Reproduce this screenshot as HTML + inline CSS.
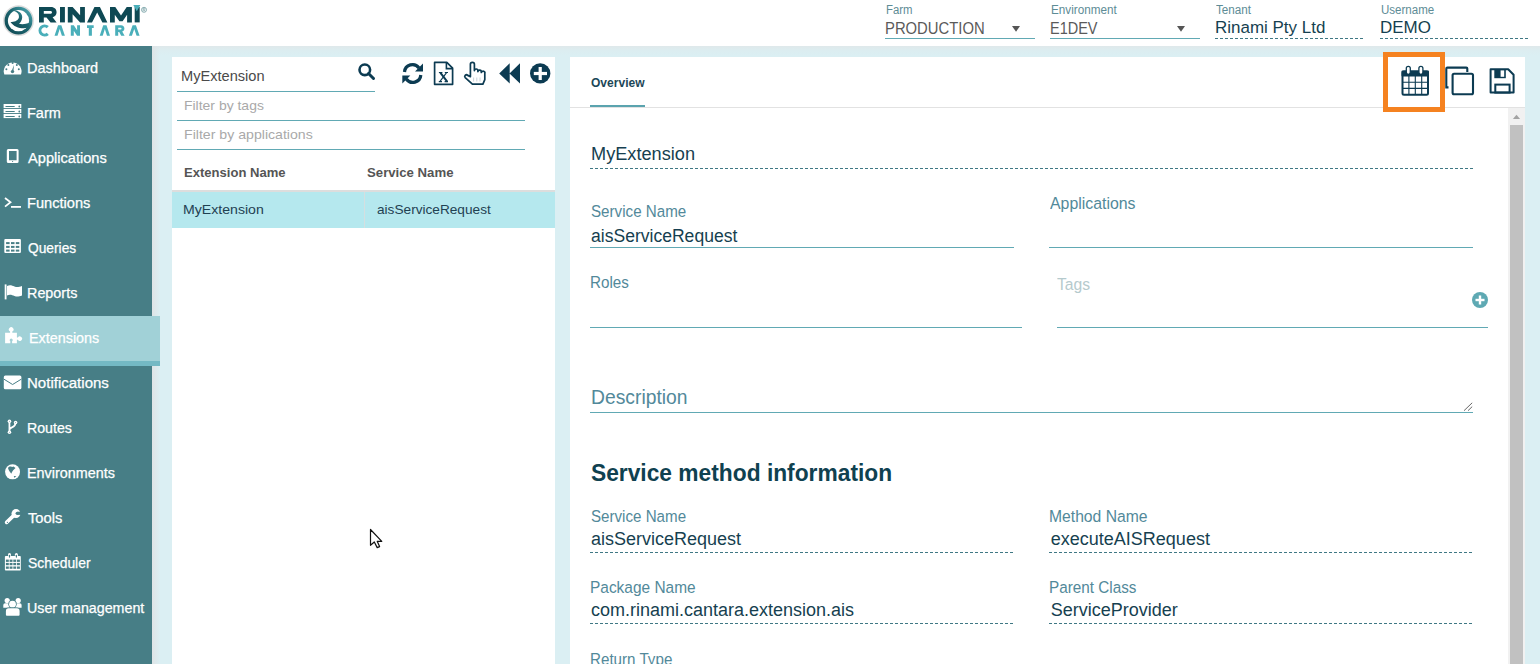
<!DOCTYPE html><html><head><meta charset="utf-8"><style>
html,body{margin:0;padding:0;width:1540px;height:664px;overflow:hidden;background:#dbeff3;font-family:'Liberation Sans', sans-serif;}
</style></head><body>
<div style="position:absolute;left:0px;top:0px;width:1540px;height:46px;background:#fff"></div>
<div style="position:absolute;left:152px;top:46px;width:1388px;height:9px;background:linear-gradient(to bottom,rgba(226,226,226,0.5),rgba(226,226,226,0.15) 50%,rgba(226,226,226,0))"></div>
<svg style="position:absolute;left:0px;top:0px;overflow:visible" width="150" height="46" viewBox="0 0 150 46">
<defs><linearGradient id="lg" x1="1" y1="0" x2="0" y2="1"><stop offset="0" stop-color="#55b5bf"/><stop offset="0.45" stop-color="#1d6670"/><stop offset="1" stop-color="#0e4650"/></linearGradient></defs>
<circle cx="18.5" cy="20.7" r="15.4" fill="#dcdcdc"/>
<circle cx="18.5" cy="20.7" r="13.9" fill="url(#lg)"/>
<circle cx="18.5" cy="20.7" r="10.6" fill="#fff"/>
<path d="M14.5 10.2 C19 10.5 22.5 13.5 22.2 17.5 C22 20.5 20.5 22.5 19 23.8 C22 24.6 26 24.2 29.5 22.8 L28.5 27.5 C23 29.5 14.5 28 10.5 22 C14 22 17.5 21 18.8 18 C19.6 15 18 12 14 10.9Z" fill="url(#lg)"/>

<path fill="#0f4954" fill-rule="evenodd" d="M39 7 L50.8 7 C54.6 7 56.6 9.4 56.6 12.3 C56.6 14.9 55 16.6 52.6 17.2 L56.6 22.4 L50.6 22.4 L46.5 17.4 L43.8 17.4 L43.8 22.4 L39 22.4Z M43.8 10.9 L50.2 10.9 C51.6 10.9 52 11.6 52 12.3 C52 13.1 51.6 13.8 50.2 13.8 L43.8 13.8Z"/>
<rect x="60" y="7" width="4.9" height="15.4" fill="#0f4954"/>
<path fill="#0f4954" d="M67.8 22.4 L67.8 7 L72.6 7 L80.1 15.2 L80.1 7 L84.9 7 L84.9 22.4 L80.1 22.4 L72.6 14.2 L72.6 22.4Z"/>
<path fill="#0f4954" d="M87 22.4 L94.45 7 L99.95 7 L107.4 22.4 L102.40 22.4 L97.20 12.39 L92.00 22.4Z"/>
<path fill="#0f4954" d="M110 22.4 L110 7 L115.3 7 L121 15.6 L126.7 7 L131.9 7 L131.9 22.4 L127.1 22.4 L127.1 14.8 L122.6 21.2 L119.4 21.2 L114.8 14.8 L114.8 22.4Z"/>
<rect x="134.7" y="7" width="5" height="15.4" fill="#0f4954"/>
<path fill="#4aafba" d="M133.3 5 L140.4 5 L136.8 11.2Z"/>
<circle cx="144" cy="9.8" r="2.5" fill="none" stroke="#6f9aa0" stroke-width="0.8"/><path d="M143.1 11.3 V8.4 H144.3 A0.75 0.75 0 0 1 144.3 9.9 H143.1 M144.2 9.9 L145 11.3" fill="none" stroke="#6f9aa0" stroke-width="0.6"/>
<path d="M47.8 27.2 A4.6 4.6 0 1 0 47.8 33.8" fill="none" stroke="#4aafba" stroke-width="3"/>
<path fill="#4aafba" d="M54.5 35.7 L58.05 25.3 L61.35 25.3 L64.9 35.7 L61.90 35.7 L59.70 28.94 L57.50 35.7Z"/>
<path fill="#4aafba" d="M70.8 35.7 L70.8 25.3 L73.8 25.3 L77.1 30.3 L77.1 25.3 L80 25.3 L80 35.7 L77.1 35.7 L73.8 30.7 L73.8 35.7Z"/>
<path fill="#4aafba" d="M87 25.3 L93.7 25.3 L93.7 27.9 L91.9 27.9 L91.9 35.7 L88.8 35.7 L88.8 27.9 L87 27.9Z"/>
<path fill="#4aafba" d="M99.7 35.7 L103.20 25.3 L106.50 25.3 L110 35.7 L107.00 35.7 L104.85 28.94 L102.70 35.7Z"/>
<path fill="#4aafba" fill-rule="evenodd" d="M115.2 25.3 L121 25.3 C123.2 25.3 124.4 26.8 124.4 28.6 C124.4 30.1 123.6 31.2 122.2 31.6 L124.6 35.7 L121.2 35.7 L119.2 32 L118.2 32 L118.2 35.7 L115.2 35.7Z M118.2 27.8 L120.8 27.8 C121.3 27.8 121.5 28.2 121.5 28.6 C121.5 29.1 121.3 29.5 120.8 29.5 L118.2 29.5Z"/>
<path fill="#4aafba" d="M128.9 35.7 L132.60 25.3 L135.90 25.3 L139.6 35.7 L136.60 35.7 L134.25 28.94 L131.90 35.7Z"/>
</svg>
<div style="position:absolute;left:885.50px;top:4px;font-size:12px;line-height:12px;color:#5d8c96;font-weight:normal;white-space:nowrap;transform:scaleX(0.9464);transform-origin:0 0;">Farm</div>
<div style="position:absolute;left:884.57px;top:21px;font-size:16px;line-height:16px;color:#5a5a5a;font-weight:normal;white-space:nowrap;transform:scaleX(0.9264);transform-origin:0 0;">PRODUCTION</div>
<div style="position:absolute;left:885px;top:38px;width:150px;height:1px;background:#61a9b4"></div>
<svg style="position:absolute;left:1012px;top:26.2px;overflow:visible" width="9" height="7" viewBox="0 0 9 7"><path d="M0 0 L8 0 L4 5.8Z" fill="#555"/></svg>
<div style="position:absolute;left:1050.50px;top:4px;font-size:12px;line-height:12px;color:#5d8c96;font-weight:normal;white-space:nowrap;transform:scaleX(0.9746);transform-origin:0 0;">Environment</div>
<div style="position:absolute;left:1049.59px;top:21px;font-size:16px;line-height:16px;color:#5a5a5a;font-weight:normal;white-space:nowrap;transform:scaleX(0.9055);transform-origin:0 0;">E1DEV</div>
<div style="position:absolute;left:1050px;top:38px;width:150px;height:1px;background:#61a9b4"></div>
<svg style="position:absolute;left:1177px;top:26.2px;overflow:visible" width="9" height="7" viewBox="0 0 9 7"><path d="M0 0 L8 0 L4 5.8Z" fill="#555"/></svg>
<div style="position:absolute;left:1215.50px;top:4px;font-size:12px;line-height:12px;color:#5d8c96;font-weight:normal;white-space:nowrap;transform:scaleX(0.9729);transform-origin:0 0;">Tenant</div>
<div style="position:absolute;left:1215.46px;top:19px;font-size:16.3px;line-height:16.3px;color:#163f50;font-weight:normal;white-space:nowrap;transform:scaleX(1.0423);transform-origin:0 0;">Rinami Pty Ltd</div>
<div style="position:absolute;left:1215px;top:38px;width:150px;height:1px;background:repeating-linear-gradient(to right,#3f7884 0 3px,transparent 3px 5px)"></div>
<div style="position:absolute;left:1380.50px;top:4px;font-size:12px;line-height:12px;color:#5d8c96;font-weight:normal;white-space:nowrap;transform:scaleX(0.9609);transform-origin:0 0;">Username</div>
<div style="position:absolute;left:1380.46px;top:19px;font-size:16.3px;line-height:16.3px;color:#163f50;font-weight:normal;white-space:nowrap;transform:scaleX(1.0428);transform-origin:0 0;">DEMO</div>
<div style="position:absolute;left:1380px;top:38px;width:150px;height:1px;background:repeating-linear-gradient(to right,#3f7884 0 3px,transparent 3px 5px)"></div>
<div style="position:absolute;left:0px;top:46px;width:152px;height:618px;background:#477e86"></div>
<div style="position:absolute;left:152px;top:46px;width:8px;height:618px;background:linear-gradient(to right,#dfe4e6,rgba(223,228,230,0))"></div>
<div style="position:absolute;left:0px;top:316px;width:160px;height:50px;background:#a1d1d7"></div>
<div style="position:absolute;left:0px;top:361px;width:160px;height:5px;background:#74b9c4"></div>
<div style="position:absolute;left:27.36px;top:61px;font-size:14px;line-height:14px;color:#fff;font-weight:normal;white-space:nowrap;transform:scaleX(1.0374);transform-origin:0 0;-webkit-text-stroke:0.25px #fff">Dashboard</div>
<div style="position:absolute;left:27.36px;top:106px;font-size:14px;line-height:14px;color:#fff;font-weight:normal;white-space:nowrap;transform:scaleX(1.0355);transform-origin:0 0;-webkit-text-stroke:0.25px #fff">Farm</div>
<div style="position:absolute;left:28.40px;top:151px;font-size:14px;line-height:14px;color:#fff;font-weight:normal;white-space:nowrap;transform:scaleX(1.0439);transform-origin:0 0;-webkit-text-stroke:0.25px #fff">Applications</div>
<div style="position:absolute;left:27.36px;top:196px;font-size:14px;line-height:14px;color:#fff;font-weight:normal;white-space:nowrap;transform:scaleX(1.0436);transform-origin:0 0;-webkit-text-stroke:0.25px #fff">Functions</div>
<div style="position:absolute;left:28.40px;top:241px;font-size:14px;line-height:14px;color:#fff;font-weight:normal;white-space:nowrap;transform:scaleX(0.9833);transform-origin:0 0;-webkit-text-stroke:0.25px #fff">Queries</div>
<div style="position:absolute;left:27.37px;top:286px;font-size:14px;line-height:14px;color:#fff;font-weight:normal;white-space:nowrap;transform:scaleX(1.0266);transform-origin:0 0;-webkit-text-stroke:0.25px #fff">Reports</div>
<div style="position:absolute;left:28.97px;top:331px;font-size:14px;line-height:14px;color:#fff;font-weight:normal;white-space:nowrap;transform:scaleX(1.0255);transform-origin:0 0;-webkit-text-stroke:0.25px #fff">Extensions</div>
<div style="position:absolute;left:27.33px;top:376px;font-size:14px;line-height:14px;color:#fff;font-weight:normal;white-space:nowrap;transform:scaleX(1.0737);transform-origin:0 0;-webkit-text-stroke:0.25px #fff">Notifications</div>
<div style="position:absolute;left:27.39px;top:421px;font-size:14px;line-height:14px;color:#fff;font-weight:normal;white-space:nowrap;transform:scaleX(1.0125);transform-origin:0 0;-webkit-text-stroke:0.25px #fff">Routes</div>
<div style="position:absolute;left:27.37px;top:466px;font-size:14px;line-height:14px;color:#fff;font-weight:normal;white-space:nowrap;transform:scaleX(1.0261);transform-origin:0 0;-webkit-text-stroke:0.25px #fff">Environments</div>
<div style="position:absolute;left:28.40px;top:511px;font-size:14px;line-height:14px;color:#fff;font-weight:normal;white-space:nowrap;transform:scaleX(1.0525);transform-origin:0 0;-webkit-text-stroke:0.25px #fff">Tools</div>
<div style="position:absolute;left:28.40px;top:556px;font-size:14px;line-height:14px;color:#fff;font-weight:normal;white-space:nowrap;transform:scaleX(0.9924);transform-origin:0 0;-webkit-text-stroke:0.25px #fff">Scheduler</div>
<div style="position:absolute;left:27.38px;top:601px;font-size:14px;line-height:14px;color:#fff;font-weight:normal;white-space:nowrap;transform:scaleX(1.0186);transform-origin:0 0;-webkit-text-stroke:0.25px #fff">User management</div>
<svg style="position:absolute;left:0px;top:0px;overflow:visible" width="30" height="664" viewBox="0 0 30 664"><path d="M4.3 74.4 A8.9 8.9 0 1 1 21 74.4 Z" fill="#fff"/><circle cx="6.4" cy="69.2" r="1" fill="#477e86"/><circle cx="8.4" cy="65" r="1" fill="#477e86"/><circle cx="12.6" cy="63" r="1" fill="#477e86"/><circle cx="16.8" cy="65" r="1" fill="#477e86"/><circle cx="18.8" cy="69.2" r="1" fill="#477e86"/><path d="M11.6 71.3 L13.9 65 L13.4 71.6Z" fill="#477e86"/><circle cx="12.5" cy="71.6" r="1.7" fill="#477e86"/><rect x="3.6" y="104" width="17.7" height="4.1" fill="#fff"/><rect x="5.4" y="106" width="9.4" height="1.1" rx="0.5" fill="#477e86"/><circle cx="19.3" cy="106.5" r="0.9" fill="#477e86"/><rect x="3.6" y="109" width="17.7" height="4.1" fill="#fff"/><rect x="5.4" y="111" width="9.4" height="1.1" rx="0.5" fill="#477e86"/><circle cx="19.3" cy="111.5" r="0.9" fill="#477e86"/><rect x="3.6" y="114" width="17.7" height="4.1" fill="#fff"/><rect x="5.4" y="116" width="9.4" height="1.1" rx="0.5" fill="#477e86"/><circle cx="19.3" cy="116.5" r="0.9" fill="#477e86"/><path fill-rule="evenodd" fill="#fff" d="M8.3 149 H17.1 A1.5 1.5 0 0 1 18.6 150.5 V161.5 A1.5 1.5 0 0 1 17.1 163 H8.3 A1.5 1.5 0 0 1 6.8 161.5 V150.5 A1.5 1.5 0 0 1 8.3 149Z M9 151 V160.2 H16.6 V151Z"/><circle cx="12.6" cy="161.5" r="0.6" fill="#477e86"/><path d="M5 198 L10.5 202.3 L5 206.6" fill="none" stroke="#fff" stroke-width="1.8"/><rect x="11" y="206" width="10" height="1.8" fill="#fff"/><rect x="4.3" y="239" width="16.6" height="13.9" rx="1" fill="#fff"/><rect x="6.1" y="242.1" width="3.5" height="2" fill="#477e86"/><rect x="6.1" y="245.9" width="3.5" height="2" fill="#477e86"/><rect x="6.1" y="249.6" width="3.5" height="2" fill="#477e86"/><rect x="11.0" y="242.1" width="3.5" height="2" fill="#477e86"/><rect x="11.0" y="245.9" width="3.5" height="2" fill="#477e86"/><rect x="11.0" y="249.6" width="3.5" height="2" fill="#477e86"/><rect x="15.8" y="242.1" width="3.5" height="2" fill="#477e86"/><rect x="15.8" y="245.9" width="3.5" height="2" fill="#477e86"/><rect x="15.8" y="249.6" width="3.5" height="2" fill="#477e86"/><rect x="4.7" y="284.4" width="1.8" height="15" fill="#fff"/><path d="M7 286 C10 284.5 12 285.5 14.5 286.5 C17 287.5 19 287 22 286 L22 295.5 C19 296.5 17 297 14.5 296 C12 295 10 294 7 295.5Z" fill="#fff"/><path d="M5.1 332.8 H10.1 V331.6 A2.3 2.3 0 1 1 12.3 331.6 V332.8 H16.9 V337.6 H17.9 A2.2 2.2 0 1 1 17.9 339.8 H16.9 V343.3 H12.1 V341.3 A1.5 1.5 0 1 0 10.3 341.3 V343.3 H5.1 Z" fill="#fff"/><rect x="3.8" y="375.6" width="17.6" height="13.6" rx="1.5" fill="#fff"/><path d="M3.8 379.1 L12.6 384.5 L21.4 379.1" fill="none" stroke="#477e86" stroke-width="1"/><path d="M9.45 421.3 V432.2 M15.5 422.6 C15.5 426.5 13 427 11.5 427.6 C10 428.2 9.45 429 9.45 430" fill="none" stroke="#fff" stroke-width="1.8"/><circle cx="9.45" cy="421.3" r="1.8" fill="#fff"/><circle cx="15.6" cy="422.5" r="1.8" fill="#fff"/><circle cx="9.45" cy="432.2" r="1.8" fill="#fff"/><circle cx="9.45" cy="421.3" r="0.45" fill="#477e86"/><circle cx="15.6" cy="422.5" r="0.45" fill="#477e86"/><circle cx="9.45" cy="432.2" r="0.45" fill="#477e86"/><circle cx="12.55" cy="471.85" r="7.5" fill="#fff"/><path d="M8 468 C9 466.5 10.5 466.3 12 467 L13.5 466.6 L15.5 468 L13.2 470.2 L12.2 471.8 L11.2 473.8 C10.5 472.5 9.5 471.5 8.6 469.8Z" fill="#477e86"/><path d="M13.8 476 L16.4 476.3 L14.3 477.8Z" fill="#477e86"/><path d="M6.6 522.4 L13.6 515.6" stroke="#fff" stroke-width="3.6" stroke-linecap="round"/><circle cx="16" cy="513.6" r="4.5" fill="#fff"/><circle cx="17.2" cy="513.3" r="1.6" fill="#477e86"/><rect x="17.2" y="511.7" width="5" height="3.2" fill="#477e86"/><circle cx="7.4" cy="522.3" r="0.65" fill="#477e86"/><rect x="4.9" y="556.1" width="15.9" height="14.5" rx="0.8" fill="#fff"/><rect x="5.9" y="559.6" width="2.9" height="2.3" fill="#477e86"/><rect x="5.9" y="562.9" width="2.9" height="2.3" fill="#477e86"/><rect x="5.9" y="566.5" width="2.9" height="2.3" fill="#477e86"/><rect x="9.6" y="559.6" width="2.9" height="2.3" fill="#477e86"/><rect x="9.6" y="562.9" width="2.9" height="2.3" fill="#477e86"/><rect x="9.6" y="566.5" width="2.9" height="2.3" fill="#477e86"/><rect x="13.3" y="559.6" width="2.9" height="2.3" fill="#477e86"/><rect x="13.3" y="562.9" width="2.9" height="2.3" fill="#477e86"/><rect x="13.3" y="566.5" width="2.9" height="2.3" fill="#477e86"/><rect x="17.0" y="559.6" width="2.9" height="2.3" fill="#477e86"/><rect x="17.0" y="562.9" width="2.9" height="2.3" fill="#477e86"/><rect x="17.0" y="566.5" width="2.9" height="2.3" fill="#477e86"/><rect x="8" y="553.1" width="3" height="5" rx="1.5" fill="#fff"/><rect x="14.9" y="553.1" width="3" height="5" rx="1.5" fill="#fff"/><rect x="8.9" y="554.7" width="1.2" height="3" rx="0.6" fill="#477e86"/><rect x="15.8" y="554.7" width="1.2" height="3" rx="0.6" fill="#477e86"/><circle cx="7.2" cy="600.5" r="2.6" fill="#fff"/><circle cx="18.2" cy="600.5" r="2.6" fill="#fff"/><path d="M3.3 607.7 V605 A1.8 1.8 0 0 1 5.1 603.2 H9.8 V607.7Z" fill="#fff"/><path d="M21.6 607.7 V605 A1.8 1.8 0 0 0 19.8 603.2 H15.2 V607.7Z" fill="#fff"/><circle cx="12.5" cy="604.2" r="4.2" fill="#477e86"/><circle cx="12.5" cy="604.2" r="3.4" fill="#fff"/><path d="M5.1 616.2 V611 A3.4 3.4 0 0 1 8.5 607.5 H16.5 A3.4 3.4 0 0 1 20.4 611 V616.2 Z" fill="#477e86"/><path d="M5.9 615.7 V611 A2.7 2.7 0 0 1 8.6 608.3 H16.9 A2.7 2.7 0 0 1 19.6 611 V614.7 A1 1 0 0 1 18.6 615.7 H6.9 A1 1 0 0 1 5.9 614.7Z" fill="#fff"/></svg>
<div style="position:absolute;left:172px;top:57px;width:383px;height:607px;background:#fff"></div>
<div style="position:absolute;left:180.96px;top:69px;font-size:14px;line-height:14px;color:#4a4a4a;font-weight:normal;white-space:nowrap;transform:scaleX(1.0426);transform-origin:0 0;">MyExtension</div>
<div style="position:absolute;left:177px;top:91px;width:198px;height:1px;background:#61a9b4"></div>
<svg style="position:absolute;left:358px;top:63px;overflow:visible" width="17" height="17" viewBox="0 0 17 17"><circle cx="6.8" cy="6.8" r="5.3" fill="none" stroke="#0c3b52" stroke-width="2.6"/><path d="M10.5 10.5 L15.5 15.5" stroke="#0c3b52" stroke-width="3" stroke-linecap="round"/></svg>
<div style="position:absolute;left:183.97px;top:99px;font-size:13.5px;line-height:13.5px;color:#a9a9a9;font-weight:normal;white-space:nowrap;transform:scaleX(1.0336);transform-origin:0 0;">Filter by tags</div>
<div style="position:absolute;left:177px;top:120px;width:348px;height:1px;background:#61a9b4"></div>
<div style="position:absolute;left:183.95px;top:128px;font-size:13.5px;line-height:13.5px;color:#a9a9a9;font-weight:normal;white-space:nowrap;transform:scaleX(1.0466);transform-origin:0 0;">Filter by applications</div>
<div style="position:absolute;left:177px;top:149px;width:348px;height:1px;background:#61a9b4"></div>
<svg style="position:absolute;left:0px;top:0px;overflow:visible" width="600" height="100" viewBox="0 0 600 100">
<path d="M404.5 72 A8 8 0 0 1 419 68" fill="none" stroke="#0c3b52" stroke-width="3.2"/>
<path d="M423 63.5 L423 71.5 L415 71.5Z" fill="#0c3b52"/>
<path d="M420.8 75 A8 8 0 0 1 406.3 79" fill="none" stroke="#0c3b52" stroke-width="3.2"/>
<path d="M402.3 83.5 L402.3 75.5 L410.3 75.5Z" fill="#0c3b52"/>
<path d="M434.6 62.4 L446.8 62.4 L452.6 68.2 L452.6 84.3 L434.6 84.3Z" fill="none" stroke="#0c3b52" stroke-width="1.7" stroke-linejoin="round"/>
<path d="M446.4 62.6 L446.4 68.6 L452.4 68.6" fill="none" stroke="#0c3b52" stroke-width="1.6"/>
<path d="M440.3 72.6 L447.2 81.6" stroke="#0c3b52" stroke-width="2"/>
<path d="M446.6 72.6 L439.8 81.6" stroke="#0c3b52" stroke-width="1.1"/>
<path d="M438.9 72.5 L442.4 72.5 M444.8 72.5 L448 72.5 M438.8 81.6 L442 81.6 M444.6 81.6 L448 81.6" stroke="#0c3b52" stroke-width="1.1"/>
<path d="M470.4 76.6 L470.4 64.3 A2 2 0 0 1 474.4 64.3 L474.4 70.6 A1.75 1.75 0 0 1 477.9 70.9 L477.9 71.6 A1.7 1.7 0 0 1 481.3 71.9 L481.3 72.5 A1.75 1.75 0 0 1 484.8 73.6 L484.8 79.6 L482.9 84.1 L472.4 84.1 L465.2 77.6 A1.65 1.65 0 0 1 467.7 75.4 Z" fill="none" stroke="#0c3b52" stroke-width="1.7" stroke-linejoin="round"/>
<path d="M473.6 77.5 L473.6 81.5 M476.8 77.5 L476.8 81.5 M480 77.5 L480 81.5" stroke="#c5cfd6" stroke-width="0.9"/>
<path d="M499.2 73.4 L509.7 63.2 L509.7 83.6Z M509.5 73.4 L520 63.2 L520 83.6Z" fill="#0c3b52"/>
<circle cx="540.2" cy="73.4" r="10.2" fill="#0c3b52"/>
<rect x="533.8" y="71.9" width="13.2" height="3.2" fill="#fff"/>
<rect x="538.6" y="67" width="3.2" height="13" fill="#fff"/>
</svg>
<div style="position:absolute;left:184.00px;top:166px;font-size:13.5px;line-height:13.5px;color:#555;font-weight:bold;white-space:nowrap;transform:scaleX(0.9666);transform-origin:0 0;">Extension Name</div>
<div style="position:absolute;left:367.00px;top:166px;font-size:13.5px;line-height:13.5px;color:#555;font-weight:bold;white-space:nowrap;transform:scaleX(0.9769);transform-origin:0 0;">Service Name</div>
<div style="position:absolute;left:172px;top:190px;width:383px;height:2px;background:#dddddd"></div>
<div style="position:absolute;left:172px;top:192px;width:383px;height:36px;background:#b5e8ee"></div>
<div style="position:absolute;left:364px;top:192px;width:1px;height:36px;background:#d5dfe0"></div>
<div style="position:absolute;left:182.95px;top:203px;font-size:13.5px;line-height:13.5px;color:#1f4152;font-weight:normal;white-space:nowrap;transform:scaleX(1.0452);transform-origin:0 0;">MyExtension</div>
<div style="position:absolute;left:377.00px;top:203px;font-size:13.5px;line-height:13.5px;color:#1f4152;font-weight:normal;white-space:nowrap;transform:scaleX(1.0106);transform-origin:0 0;">aisServiceRequest</div>
<svg style="position:absolute;left:370px;top:529px;overflow:visible" width="14" height="20" viewBox="0 0 14 20"><path d="M0.5 0.5 L0.5 16.3 L4.3 13 L7.2 18.6 L9.6 17.6 L7.3 12.4 L11.8 12.3 Z" fill="#fff" stroke="#111" stroke-width="1.2" stroke-linejoin="round"/></svg>
<div style="position:absolute;left:570px;top:57px;width:955px;height:607px;background:#fff"></div>
<div style="position:absolute;left:590.80px;top:77px;font-size:12px;line-height:12px;color:#1d4758;font-weight:bold;white-space:nowrap;transform:scaleX(1.0031);transform-origin:0 0;">Overview</div>
<div style="position:absolute;left:570px;top:107px;width:955px;height:1px;background:#e2e2e2"></div>
<div style="position:absolute;left:590px;top:105px;width:55px;height:2px;background:#5aa3ae"></div>
<div style="position:absolute;left:1383px;top:52px;width:52px;height:50px;border:5px solid #f58220"></div>
<svg style="position:absolute;left:0px;top:0px;overflow:visible" width="1540" height="100" viewBox="0 0 1540 100">
<rect x="1402.5" y="71.5" width="25.5" height="23.2" rx="1.5" fill="none" stroke="#0c3b52" stroke-width="2"/>
<rect x="1401.5" y="70.5" width="27.5" height="6" rx="1" fill="#0c3b52"/>
<path d="M1402 82.2 L1428.5 82.2 M1402 88.4 L1428.5 88.4 M1408.9 76 L1408.9 95 M1415.3 76 L1415.3 95 M1421.7 76 L1421.7 95" stroke="#0c3b52" stroke-width="1.1"/>
<rect x="1406.3" y="66.3" width="4" height="8" rx="2" fill="#fff" stroke="#0c3b52" stroke-width="1.3"/>
<rect x="1418.9" y="66.3" width="4" height="8" rx="2" fill="#fff" stroke="#0c3b52" stroke-width="1.3"/>
<path d="M1448.5 87.4 L1446.3 87.4 L1446.3 68.7 Q1446.3 67.6 1447.4 67.6 L1466.3 67.6 Q1467.3 67.6 1467.3 68.6 L1467.3 72" fill="none" stroke="#0c3b52" stroke-width="2.1"/>
<rect x="1452.6" y="73.8" width="20.4" height="20.4" rx="1.5" fill="none" stroke="#0c3b52" stroke-width="2.1"/>
<path d="M1490.6 69.3 L1508.2 69.3 L1513.6 74.8 L1513.6 92.5 L1490.6 92.5Z" fill="none" stroke="#0c3b52" stroke-width="2" stroke-linejoin="round"/>
<rect x="1494.3" y="69.5" width="11.5" height="8.7" fill="#0c3b52"/>
<rect x="1500.6" y="70.4" width="3.6" height="6.4" fill="#fff"/>
<rect x="1495.3" y="84.6" width="14.3" height="8" fill="none" stroke="#0c3b52" stroke-width="2"/>
</svg>
<div style="position:absolute;left:1508px;top:108px;width:17px;height:556px;background:#f1f1f1"></div>
<svg style="position:absolute;left:1508px;top:108px;overflow:visible" width="17" height="20" viewBox="0 0 17 20"><path d="M4.9 11 L12.1 11 L8.5 6.8Z" fill="#a3a3a3"/></svg>
<div style="position:absolute;left:1510px;top:125px;width:13px;height:539px;background:#c1c1c1"></div>
<div style="position:absolute;left:590.99px;top:145px;font-size:18px;line-height:18px;color:#163f50;font-weight:normal;white-space:nowrap;transform:scaleX(1.0096);transform-origin:0 0;">MyExtension</div>
<div style="position:absolute;left:590px;top:168px;width:883px;height:1px;background:repeating-linear-gradient(to right,#3f7884 0 3px,transparent 3px 5px)"></div>
<div style="position:absolute;left:590.80px;top:203px;font-size:16.3px;line-height:16.3px;color:#52899a;font-weight:normal;white-space:nowrap;transform:scaleX(0.9316);transform-origin:0 0;">Service Name</div>
<div style="position:absolute;left:591.20px;top:227px;font-size:18px;line-height:18px;color:#163f50;font-weight:normal;white-space:nowrap;transform:scaleX(0.9749);transform-origin:0 0;">aisServiceRequest</div>
<div style="position:absolute;left:590px;top:247px;width:424px;height:1px;background:#61a9b4"></div>
<div style="position:absolute;left:1050.00px;top:195px;font-size:16.3px;line-height:16.3px;color:#52899a;font-weight:normal;white-space:nowrap;transform:scaleX(0.9743);transform-origin:0 0;">Applications</div>
<div style="position:absolute;left:1049px;top:247px;width:424px;height:1px;background:#61a9b4"></div>
<div style="position:absolute;left:590.17px;top:274px;font-size:16.3px;line-height:16.3px;color:#52899a;font-weight:normal;white-space:nowrap;transform:scaleX(0.9337);transform-origin:0 0;">Roles</div>
<div style="position:absolute;left:590px;top:327px;width:432px;height:1px;background:#61a9b4"></div>
<div style="position:absolute;left:1057.00px;top:276px;font-size:16.3px;line-height:16.3px;color:#b5cacd;font-weight:normal;white-space:nowrap;transform:scaleX(0.9635);transform-origin:0 0;">Tags</div>
<div style="position:absolute;left:1057px;top:327px;width:431px;height:1px;background:#61a9b4"></div>
<svg style="position:absolute;left:1472px;top:292px;overflow:visible" width="16" height="16" viewBox="0 0 16 16"><circle cx="8" cy="8" r="8" fill="#5ea9b3"/><rect x="3.5" y="6.8" width="9" height="2.4" fill="#fff"/><rect x="6.8" y="3.5" width="2.4" height="9" fill="#fff"/></svg>
<div style="position:absolute;left:590.91px;top:388px;font-size:19.5px;line-height:19.5px;color:#52899a;font-weight:normal;white-space:nowrap;transform:scaleX(0.9896);transform-origin:0 0;">Description</div>
<div style="position:absolute;left:590px;top:412px;width:883px;height:1px;background:#61a9b4"></div>
<svg style="position:absolute;left:0px;top:0px;overflow:visible" width="1540" height="664" viewBox="0 0 1540 664"><path d="M1464.3 410.4 L1471.9 403.1 M1468.3 410.4 L1471.9 406.9" stroke="#555" stroke-width="0.9" stroke-linecap="round"/></svg>
<div style="position:absolute;left:591.10px;top:462px;font-size:23.3px;line-height:23.3px;color:#0f4150;font-weight:bold;white-space:nowrap;transform:scaleX(0.9773);transform-origin:0 0;">Service method information</div>
<div style="position:absolute;left:591.00px;top:508px;font-size:16.3px;line-height:16.3px;color:#52899a;font-weight:normal;white-space:nowrap;transform:scaleX(0.9297);transform-origin:0 0;">Service Name</div>
<div style="position:absolute;left:591.00px;top:530px;font-size:18px;line-height:18px;color:#163f50;font-weight:normal;white-space:nowrap;">aisServiceRequest</div>
<div style="position:absolute;left:590px;top:552px;width:424px;height:1px;background:repeating-linear-gradient(to right,#3f7884 0 3px,transparent 3px 5px)"></div>
<div style="position:absolute;left:1049.14px;top:508px;font-size:16.3px;line-height:16.3px;color:#52899a;font-weight:normal;white-space:nowrap;transform:scaleX(0.9634);transform-origin:0 0;">Method Name</div>
<div style="position:absolute;left:1050.80px;top:530px;font-size:18px;line-height:18px;color:#163f50;font-weight:normal;white-space:nowrap;">executeAISRequest</div>
<div style="position:absolute;left:1049px;top:552px;width:424px;height:1px;background:repeating-linear-gradient(to right,#3f7884 0 3px,transparent 3px 5px)"></div>
<div style="position:absolute;left:590.05px;top:579px;font-size:16.3px;line-height:16.3px;color:#52899a;font-weight:normal;white-space:nowrap;transform:scaleX(0.9487);transform-origin:0 0;">Package Name</div>
<div style="position:absolute;left:591.00px;top:601px;font-size:18px;line-height:18px;color:#163f50;font-weight:normal;white-space:nowrap;">com.rinami.cantara.extension.ais</div>
<div style="position:absolute;left:590px;top:623px;width:424px;height:1px;background:repeating-linear-gradient(to right,#3f7884 0 3px,transparent 3px 5px)"></div>
<div style="position:absolute;left:1049.16px;top:579px;font-size:16.3px;line-height:16.3px;color:#52899a;font-weight:normal;white-space:nowrap;transform:scaleX(0.9385);transform-origin:0 0;">Parent Class</div>
<div style="position:absolute;left:1050.80px;top:601px;font-size:18px;line-height:18px;color:#163f50;font-weight:normal;white-space:nowrap;">ServiceProvider</div>
<div style="position:absolute;left:1049px;top:623px;width:424px;height:1px;background:repeating-linear-gradient(to right,#3f7884 0 3px,transparent 3px 5px)"></div>
<div style="position:absolute;left:590.07px;top:651px;font-size:16.3px;line-height:16.3px;color:#52899a;font-weight:normal;white-space:nowrap;transform:scaleX(0.9312);transform-origin:0 0;">Return Type</div>
</body></html>
